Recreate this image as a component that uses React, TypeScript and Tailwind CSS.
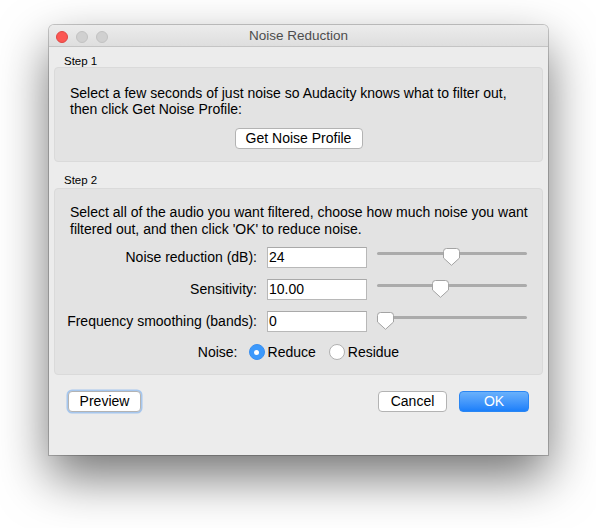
const font = { fontFamily: '"Liberation Sans", Arial, sans-serif' };

const Thumb = ({ left }: { left: number }) => (
  <svg
    width="17"
    height="18"
    viewBox="0 0 17 18"
    className="absolute top-[1px]"
    style={{ left }}
  >
    <path
      d="M3.5 0.5 H13.5 Q16.5 0.5 16.5 3.5 V10 L8.5 17.3 L0.5 10 V3.5 Q0.5 0.5 3.5 0.5 Z"
      fill="#ffffff"
      stroke="#a3a3a3"
      strokeWidth="1"
    />
  </svg>
);

const Row = ({ label, value, thumb }: { label: string; value: string; thumb: number }) => (
  <div className="flex items-center h-[21px]">
    <div className="w-[202px] text-right text-[14px] text-black">{label}</div>
    <div className="ml-[10px] w-[100px] h-[21px] bg-white border border-[#b8b8b8] border-t-[#a9a9a9] px-[1px] text-[14px] leading-[19px] text-black">
      {value}
    </div>
    <div className="relative ml-[10px] w-[150px] h-[21px]">
      <div className="absolute left-0 right-0 top-[5px] h-[3px] rounded-full bg-[#ababab]" />
      <Thumb left={thumb} />
    </div>
  </div>
);

const Button = ({ children, className = "" }: { children: React.ReactNode; className?: string }) => (
  <button
    className={`h-[21px] rounded-[4px] bg-white border border-[#b3b3b3] text-[14px] leading-[19px] text-black ${className}`}
  >
    {children}
  </button>
);

export default function App() {
  return (
    <div className="w-[596px] h-[528px] bg-white pl-[49px] pt-[25px]" style={font}>
      <div className="w-[499px] h-[430px] rounded-t-[5px] bg-[#ececec] shadow-[0_0_0_1px_rgba(0,0,0,0.2),0_22px_50px_rgba(0,0,0,0.55)] flex flex-col">
        {/* title bar */}
        <div className="relative h-[22px] pt-[2px] rounded-t-[5px] bg-gradient-to-b from-[#ececec] to-[#dedede] border-b border-[#c4c4c4] flex items-center justify-center">
          <div className="absolute left-[7px] top-[6px] flex gap-[8px]">
            <span className="w-[12px] h-[12px] rounded-full bg-[#fc5753] border border-[#df4744]" />
            <span className="w-[12px] h-[12px] rounded-full bg-[#d0d0d0] border border-[#c2c2c2]" />
            <span className="w-[12px] h-[12px] rounded-full bg-[#d0d0d0] border border-[#c2c2c2]" />
          </div>
          <span className="text-[13.5px] text-[#4d4d4d]">Noise Reduction</span>
        </div>

        <div className="px-[5px] flex flex-col">
          <div className="pl-[10px] mt-[8px] h-[12px] text-[11.5px] leading-[12px] text-black">Step 1</div>
          <div className="h-[95px] rounded-[4px] bg-[#e3e3e3] border border-[#dadada] flex flex-col">
            <p className="pl-[15px] pt-[17px] text-[14px] leading-[16px] text-black">
              Select a few seconds of just noise so Audacity knows what to filter out,
              <br />
              then click Get Noise Profile:
            </p>
            <div className="mt-[11px] flex justify-center">
              <Button className="w-[128px]">Get Noise Profile</Button>
            </div>
          </div>

          <div className="pl-[10px] mt-[12px] h-[12px] text-[11.5px] leading-[12px] text-black">Step 2</div>
          <div className="mt-[2px] h-[187px] rounded-[4px] bg-[#e3e3e3] border border-[#dadada] flex flex-col">
            <p className="pl-[15px] pt-[15px] text-[14px] leading-[17px] text-black">
              Select all of the audio you want filtered, choose how much noise you want
              <br />
              filtered out, and then click 'OK' to reduce noise.
            </p>
            <div className="mt-[9px] flex flex-col gap-[11px]">
              <Row label="Noise reduction (dB):" value="24" thumb={66} />
              <Row label="Sensitivity:" value="10.00" thumb={55} />
              <Row label="Frequency smoothing (bands):" value="0" thumb={0} />
            </div>
            <div className="mt-[10px] h-[20px] flex items-center justify-center text-[14px] text-black">
              <span>Noise:</span>
              <span className="ml-[11px] w-[16px] h-[16px] rounded-full bg-[#3c99fc] border border-[#3a8ff0] flex items-center justify-center">
                <span className="w-[5px] h-[5px] rounded-full bg-white" />
              </span>
              <span className="ml-[3px]">Reduce</span>
              <span className="ml-[13px] w-[16px] h-[16px] rounded-full bg-white border border-[#b1b1b1]" />
              <span className="ml-[3px]">Residue</span>
            </div>
          </div>
        </div>

        <div className="mt-[16px] px-[19px] flex items-center">
          <Button className="w-[73px] border-[#8fbcf0] shadow-[0_0_0_1.5px_rgba(110,170,240,0.55)]">Preview</Button>
          <div className="flex-1" />
          <Button className="w-[69px]">Cancel</Button>
          <button className="ml-[12px] w-[70px] h-[21px] rounded-[4px] bg-gradient-to-b from-[#69b1fb] to-[#1a7ffa] border border-[#2a86f3] text-[14px] leading-[19px] text-white">
            OK
          </button>
        </div>
      </div>
    </div>
  );
}
